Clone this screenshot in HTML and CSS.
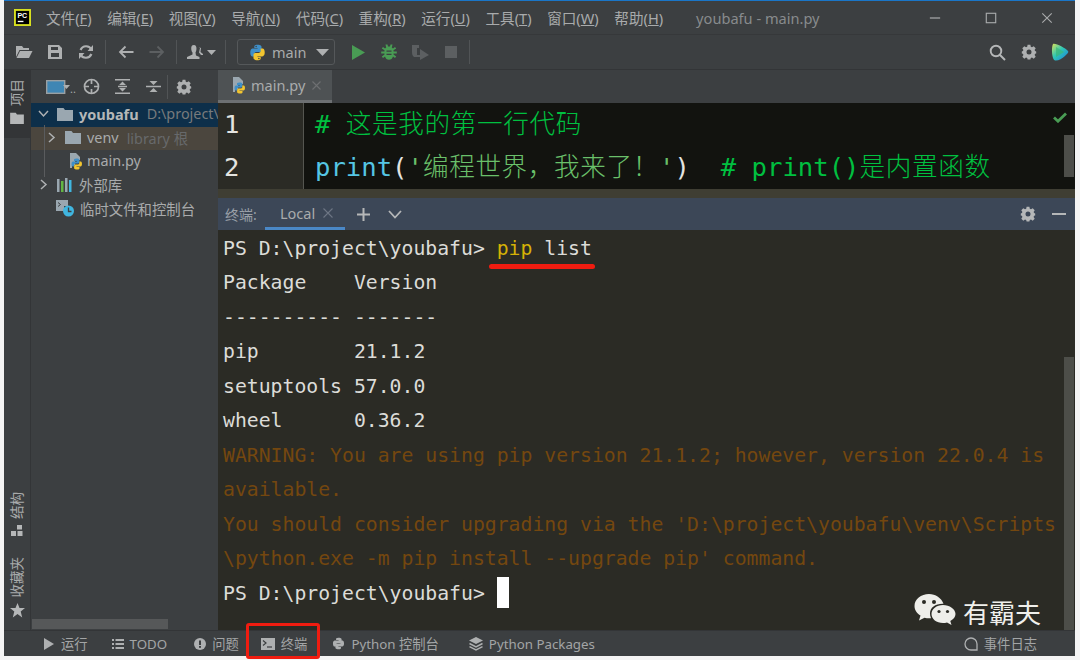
FILE: index.html
```html
<!DOCTYPE html>
<html lang="zh">
<head>
<meta charset="utf-8">
<title>youbafu - main.py</title>
<link rel="stylesheet" href="styles.css">
</head>
<body>
<svg class="defs" width="0" height="0" aria-hidden="true">
  <symbol id="py" viewBox="0 0 16 16">
    <path fill="#3f8fc8" d="M7.9 .8C4.9 .8 5 2.2 5 2.2V3.7H8.1V4.2H3.9S1.2 3.9 1.2 7.9 3.4 11.7 3.4 11.7H5V9.6S4.9 7.6 7 7.6H10S11.8 7.6 11.8 5.8V2.8S12 .8 7.9 .8Z"/>
    <path fill="#f2c530" d="M8.1 15.2C11.1 15.2 11 13.8 11 13.8V12.3H7.9V11.8H12.1S14.8 12.1 14.8 8.1 12.6 4.3 12.6 4.3H11V6.4S11.1 8.4 9 8.4H6S4.2 8.4 4.2 10.2V13.2S4 15.2 8.1 15.2Z"/>
    <circle cx="6.7" cy="2.4" r=".7" fill="#3c3f41"/><circle cx="9.3" cy="13.6" r=".7" fill="#3c3f41"/>
  </symbol>
  <symbol id="pyfile" viewBox="0 0 18 18">
    <path fill="#9aa7b0" d="M3 1H9L13 5V8H8V13H5V16H3Z"/>
    <path fill="#3f8fc8" d="M9.5 6.5C7 6.5 7 7.6 7 7.6V9H10V9.5H6.4S4.5 9.4 4.5 12 6 14.5 6 14.5H7.2V13S7.1 11.5 8.7 11.5H11S12.4 11.5 12.4 10V8S12.5 6.5 9.5 6.5Z"/>
    <path fill="#f2c530" d="M10 17.5C12.5 17.5 12.5 16.4 12.5 16.4V15H9.5V14.5H13.1S15 14.6 15 12 13.5 9.5 13.5 9.5H12.3V11S12.4 12.5 10.8 12.5H8.5S7.1 12.5 7.1 14V16S7 17.5 10 17.5Z"/>
  </symbol>
  <symbol id="gear" viewBox="0 0 16 16">
    <path fill="currentColor" fill-rule="evenodd" d="M6.6 .8H9.4L9.8 2.8 11 3.3 12.7 2.2 14.7 4.2 13.6 5.9 14.1 7.1 15.2 7.4V9.4L14.1 9.8 13.6 11 14.7 12.7 12.7 14.7 11 13.6 9.8 14.1 9.4 15.4H6.6L6.2 14.1 5 13.6 3.3 14.7 1.3 12.7 2.4 11 1.9 9.8 .8 9.4V7.4L1.9 7.1 2.4 5.9 1.3 4.2 3.3 2.2 5 3.3 6.2 2.8ZM8 5.6A2.5 2.5 0 1 0 8 10.6 2.5 2.5 0 1 0 8 5.6Z"/>
  </symbol>
  <symbol id="folder" viewBox="0 0 16 14">
    <path fill="currentColor" d="M0 1H6.5L8 3H16V14H0Z"/>
  </symbol>
</svg>

<div class="window">
  <header class="titlebar">
    <svg class="logo" viewBox="0 0 18 18"><rect width="18" height="18" fill="#d8e020"/><rect x="2" y="2" width="14" height="14" fill="#000"/><rect x="4" y="12.5" width="6" height="1.4" fill="#fff"/><text x="3.6" y="9.6" class="logo-text">PC</text></svg>
    <nav class="menu">
      <span>文件(<u>F</u>)</span><span>编辑(<u>E</u>)</span><span>视图(<u>V</u>)</span><span>导航(<u>N</u>)</span><span>代码(<u>C</u>)</span><span>重构(<u>R</u>)</span><span>运行(<u>U</u>)</span><span>工具(<u>T</u>)</span><span>窗口(<u>W</u>)</span><span>帮助(<u>H</u>)</span>
    </nav>
    <div class="wintitle">youbafu - main.py</div>
    <div class="winctl">
      <svg viewBox="0 0 14 14"><path d="M1 7H13" stroke="#a9abac" stroke-width="1.4"/></svg>
      <svg viewBox="0 0 14 14"><rect x="1.5" y="1.5" width="11" height="11" fill="none" stroke="#a9abac" stroke-width="1.3"/></svg>
      <svg viewBox="0 0 14 14"><path d="M1.5 1.5 12.5 12.5M12.5 1.5 1.5 12.5" stroke="#a9abac" stroke-width="1.3"/></svg>
    </div>
  </header>

  <div class="toolbar">
    <span class="tb"><svg width="18" height="14" viewBox="0 0 18 14"><path fill="#aeb0b1" d="M1 1H7L8.500 3H14V5H4.500L1 12Z"/><path fill="#aeb0b1" d="M5 6H17.500L14 13H1.500Z"/></svg></span>
    <span class="tb"><svg width="16" height="16" viewBox="0 0 16 16"><path fill="#aeb0b1" fill-rule="evenodd" d="M1 1H12L15 4V15H1ZM4 3V6H11V3ZM4 9V13H12V9Z"/></svg></span>
    <span class="tb"><svg width="16" height="16" viewBox="0 0 16 16"><path fill="none" stroke="#aeb0b1" stroke-width="2.200" d="M13.500 5.500A6 6 0 0 0 2.600 6M2.500 10.500A6 6 0 0 0 13.400 10"/><path fill="#aeb0b1" d="M15 1V7H9.500ZM1 15V9H6.500Z"/></svg></span>
    <span class="tsep"></span>
    <span class="tb"><svg width="16" height="14" viewBox="0 0 16 14"><path fill="none" stroke="#aeb0b1" stroke-width="1.800" d="M15.500 7H2M7.500 1.500 2 7 7.500 12.500"/></svg></span>
    <span class="tb"><svg width="16" height="14" viewBox="0 0 16 14"><path fill="none" stroke="#5c5f61" stroke-width="1.800" d="M.5 7H14M8.500 1.500 14 7 8.500 12.500"/></svg></span>
    <span class="tsep"></span>
    <span class="tb tb-user"><svg width="31" height="16" viewBox="0 0 31 16"><path fill="#aeb0b1" d="M8 1C5.500 1 5 3 5.300 5.500 5.500 7 6 8 6.500 8.500V10.500L1 13V15H13.500V13L10 11.500 9.500 8.500C11 6 11 1 8 1Z"/><path fill="#aeb0b1" d="M12.500 3 14 4 13 8.500 15 11H17V10L14.500 8 15 4Z"/><path fill="#aeb0b1" d="M21 6H30L25.500 11Z"/></svg></span>
    <span class="tsep"></span>
    <div class="runcfg">
      <svg class="ic17" viewBox="0 0 16 16"><use href="#py"/></svg>
      <span class="runname">main</span>
      <svg class="caret" width="13" height="7" viewBox="0 0 13 7"><path fill="#aeb0b1" d="M0 0H13L6.500 7Z"/></svg>
    </div>
    <span class="tb tb-run"><svg width="14" height="15" viewBox="0 0 14 15"><path fill="#499c54" d="M1 0 14 7.500 1 15Z"/></svg></span>
    <span class="tb"><svg width="16" height="16" viewBox="0 0 16 16"><path fill="#499c54" d="M4.500 .5H6.500L7 2.500H9L9.500 .5H11.500L10.800 3.500 12 4.500 14 3 15.200 4.500 12.500 6.300V7.500H15.800V9.500H12.500V10.500L15.200 12.500 14 14 12 12.500C11.500 14.500 10 15.800 8 15.800S4.500 14.500 4 12.500L2 14 .8 12.500 3.500 10.500V9.500H.2V7.500H3.500V6.300L.8 4.500 2 3 4 4.500 5.200 3.500Z"/><path fill="#3c3f41" d="M5.500 6.500H10.500V7.800H5.500ZM5.500 9.800H10.500V11H5.500Z"/></svg></span>
    <span class="tb"><svg width="18" height="16" viewBox="0 0 18 16"><path fill="#5c5f61" d="M1 1H8V4H6V11H9V13H3C1.500 12 1 10 1 8Z"/><path fill="#5c5f61" d="M9 5 18 11 9 16Z"/></svg></span>
    <span class="tb"><svg width="12" height="12" viewBox="0 0 12 12"><rect width="12" height="12" fill="#5c5f61"/></svg></span>
    <span class="tsep tsep-end"></span>
    <span class="tspace"></span>
    <span class="tb"><svg width="17" height="17" viewBox="0 0 17 17"><circle cx="7" cy="7" r="5.300" fill="none" stroke="#b5b7b8" stroke-width="1.900"/><path d="M11 11 16 16" stroke="#b5b7b8" stroke-width="2"/></svg></span>
    <span class="tb tb-gear"><svg width="16" height="16"><use href="#gear"/></svg></span>
    <span class="tb tb-brand"><svg width="18" height="18" viewBox="0 0 18 18"><defs><linearGradient id="bg" x1="0" y1="0" x2="1" y2="1"><stop offset="0" stop-color="#d8e05a"/><stop offset=".45" stop-color="#2fc8b4"/><stop offset="1" stop-color="#1c7fe0"/></linearGradient></defs><path fill="url(#bg)" d="M2 1C5 0 14 5 17 8 18 9.500 16 11 14 13 11 16 7 18 4 17.500 1 17 0 5 2 1Z"/><path fill="#3cb878" d="M5 4 13 9 5 14Z" opacity=".7"/></svg></span>
  </div>

  <div class="main">
    <aside class="strip">
      <div class="strip-top">
        <span class="vtext">项目</span>
        <svg class="strip-folder" width="14" height="12"><use href="#folder"/></svg>
      </div>
      <div class="strip-bottom">
        <span class="vtext">结构</span>
        <svg class="strip-struct" width="12" height="11" viewBox="0 0 12 11"><rect x="6" y="0" width="5" height="4.500" fill="#b5b7b8"/><rect x="0" y="6" width="5" height="5" fill="#b5b7b8"/><rect x="6.500" y="6" width="5" height="5" fill="#b5b7b8"/></svg>
        <span class="vtext vtext-fav">收藏夹</span>
        <svg class="strip-star" width="15" height="15" viewBox="0 0 15 15"><path fill="#b5b7b8" d="M7.500 0 9.500 5H15L10.700 8.500 12.200 14.500 7.500 11 2.800 14.500 4.300 8.500 0 5H5.500Z"/></svg>
      </div>
    </aside>

    <section class="project">
      <div class="proj-head">
        <span class="pb pb-view"><svg width="25" height="14" viewBox="0 0 25 14"><rect x=".7" y=".7" width="18" height="12.600" fill="#3f86b4" stroke="#9aa0a3" stroke-width="1.400"/><path fill="#aeb0b1" d="M17 5H24L20.500 9Z"/></svg><span class="dots">..</span></span>
        <span class="pb pb-c"><svg width="17" height="17" viewBox="0 0 17 17"><circle cx="8.500" cy="8.500" r="7" fill="none" stroke="#aeb0b1" stroke-width="1.700"/><path d="M8.500 1V6M8.500 11V16M1 8.500H6M11 8.500H16" stroke="#aeb0b1" stroke-width="1.700"/></svg></span>
        <span class="pb pb-c"><svg width="15" height="15" viewBox="0 0 15 15"><path d="M0 .8H15M0 14.200H15M3 7.500H12" stroke="#aeb0b1" stroke-width="1.500"/><path fill="#aeb0b1" d="M7.500 2.500 11 6H4ZM7.500 12.500 4 9H11Z"/></svg></span>
        <span class="pb pb-c"><svg width="15" height="15" viewBox="0 0 15 15"><path d="M0 7.500H15" stroke="#aeb0b1" stroke-width="1.500"/><path fill="#aeb0b1" d="M7.500 6 3.500 2H11.500ZM7.500 9 11.500 13H3.500Z"/></svg></span>
        <span class="psep"></span>
        <span class="pb pb-c"><svg width="16" height="16"><use href="#gear"/></svg></span>
      </div>
      <div class="tree">
        <div class="row row-sel">
          <svg class="chev" width="11" height="11" viewBox="0 0 11 11"><path d="M1 3 5.500 8 10 3" fill="none" stroke="#afb1b3" stroke-width="1.500"/></svg>
          <svg class="fold" width="16" height="14"><use href="#folder"/></svg>
          <b class="name-b">youbafu</b><span class="path">D:\project\</span>
        </div>
        <div class="row row-lib">
          <svg class="chev" width="11" height="11" viewBox="0 0 11 11"><path d="M3 1 8 5.500 3 10" fill="none" stroke="#afb1b3" stroke-width="1.500"/></svg>
          <svg class="fold" width="16" height="14"><use href="#folder"/></svg>
          <span class="name">venv</span><span class="dim">library 根</span>
        </div>
        <div class="row row-file">
          <svg class="pyf" width="18" height="18"><use href="#pyfile"/></svg>
          <span class="name">main.py</span>
        </div>
        <div class="row row-top">
          <svg class="chev" width="11" height="11" viewBox="0 0 11 11"><path d="M3 1 8 5.500 3 10" fill="none" stroke="#afb1b3" stroke-width="1.500"/></svg>
          <svg class="fold" width="16" height="14" viewBox="0 0 16 14"><rect x="0" y="1" width="2.500" height="13" fill="#9aa7b0"/><rect x="4" y="3" width="2.500" height="11" fill="#62b543"/><rect x="8" y="0" width="2.500" height="14" fill="#9aa7b0"/><rect x="12" y="2" width="2.500" height="12" fill="#40b6e0"/></svg>
          <span class="name">外部库</span>
        </div>
        <div class="row row-top row-nochev">
          <svg class="fold" width="18" height="18" viewBox="0 0 18 18"><path fill="#9aa7b0" d="M0 1H12V7H8V12H0Z"/><path d="M2 3.500 4.500 5.500 2 7.500" fill="none" stroke="#3c3f41" stroke-width="1"/><circle cx="12.500" cy="12" r="5.500" fill="#40b6e0"/><path d="M12.500 8.500V12.500H15.500" fill="none" stroke="#3c3f41" stroke-width="1.300"/></svg>
          <span class="name">临时文件和控制台</span>
        </div>
        <div class="guide"></div>
      </div>
      <div class="hscroll"></div>
    </section>

    <section class="work">
      <div class="tabs">
        <div class="tab">
          <svg width="18" height="18"><use href="#pyfile"/></svg>
          <span class="tabname">main.py</span>
          <svg class="tabx" width="9" height="9" viewBox="0 0 9 9"><path d="M.5 .5 8.500 8.500M8.500 .5 .5 8.500" stroke="#6e7072" stroke-width="1.100"/></svg>
        </div>
      </div>
      <div class="editor">
        <div class="gutter"><div>1</div><div>2</div></div>
        <div class="code">
          <div class="cl"><span class="cm">#&nbsp;<span class="cjk">这是我的第一行代码</span></span></div>
          <div class="cl"><span class="fn">print</span><span class="pn">(</span><span class="st">'<span class="cjk">编程世界，我来了！</span>'</span><span class="pn">)</span>&nbsp;&nbsp;<span class="cm">#&nbsp;print()<span class="cjk">是内置函数</span></span></div>
        </div>
        <svg class="check" width="14" height="11" viewBox="0 0 14 11"><path d="M1 5.500 5 9.200 13 1.500" fill="none" stroke="#499c54" stroke-width="2.800"/></svg>
        <div class="vscroll vscroll-ed"></div>
      </div>
      <div class="splitter"></div>
      <div class="termhead">
        <span class="termlabel">终端:</span>
        <div class="termtab"><span>Local</span><svg width="10" height="10" viewBox="0 0 10 10"><path d="M.5 .5 9.500 9.500M9.500 .5 .5 9.500" stroke="#6d7684" stroke-width="1.100"/></svg></div>
        <svg class="tplus" width="13" height="13" viewBox="0 0 13 13"><path d="M6.500 0V13M0 6.500H13" stroke="#b5b7b8" stroke-width="2"/></svg>
        <svg class="tchev" width="14" height="9" viewBox="0 0 14 9"><path d="M1 1 7 7.500 13 1" fill="none" stroke="#b5b7b8" stroke-width="1.800"/></svg>
        <span class="tspace"></span>
        <svg class="tgear" width="16" height="16"><use href="#gear"/></svg>
        <svg class="tmin" width="14" height="2" viewBox="0 0 14 2"><rect width="14" height="2" fill="#b5b7b8"/></svg>
      </div>
      <div class="terminal">
        <div class="tl">PS D:\project\youbafu&gt; <span class="cmd">pip</span> list</div>
        <div class="tl">Package    Version</div>
        <div class="tl">---------- -------</div>
        <div class="tl">pip        21.1.2</div>
        <div class="tl">setuptools 57.0.0</div>
        <div class="tl">wheel      0.36.2</div>
        <div class="tl warn">WARNING: You are using pip version 21.1.2; however, version 22.0.4 is</div>
        <div class="tl warn">available.</div>
        <div class="tl warn">You should consider upgrading via the 'D:\project\youbafu\venv\Scripts</div>
        <div class="tl warn">\python.exe -m pip install --upgrade pip' command.</div>
        <div class="tl">PS D:\project\youbafu&gt; <span class="cursor"></span></div>
        <div class="underline"></div>
        <div class="vscroll vscroll-term"></div>
        <div class="mark">
          <svg width="42" height="37" viewBox="0 0 42 37"><path fill="#eeeeea" d="M15 1C7 1 .5 6.300 .5 13C.5 17 3 20.500 6.500 22.600L5 27.500 10.500 24.700C12 25.100 13.500 25.300 15 25.300L17 25.200C16.300 23.500 16 22 16 20.500C16 14.500 21.500 10.500 29.500 10.800 27.500 5 21.500 1 15 1Z"/><path fill="#eeeeea" d="M29 12C22.500 12 17.500 16 17.500 21S22.500 30 29 30C30.500 30 31.500 29.800 33 29.400L37.500 32 36.300 28C39.500 26 41.500 24 41.500 21 41.500 16 35.500 12 29 12Z"/><circle cx="10" cy="9" r="2" fill="#2b2b25"/><circle cx="20" cy="9" r="2" fill="#2b2b25"/><circle cx="25" cy="18.500" r="1.600" fill="#2b2b25"/><circle cx="33.500" cy="18.500" r="1.600" fill="#2b2b25"/></svg>
          <span class="marktext">有霸夫</span>
        </div>
      </div>
    </section>
  </div>

  <footer class="status">
    <span class="si si-run"><svg width="10" height="12" viewBox="0 0 10 12"><path fill="#aeb0b1" d="M0 0 10 6 0 12Z"/></svg>运行</span>
    <span class="si"><svg width="12" height="10" viewBox="0 0 12 10"><path fill="#aeb0b1" d="M0 0H2V2H0ZM3.500 0H12V2H3.500ZM0 4H2V6H0ZM3.500 4H12V6H3.500ZM0 8H2V10H0ZM3.500 8H12V10H3.500Z"/></svg>TODO</span>
    <span class="si si-prob"><svg width="12" height="12" viewBox="0 0 12 12"><circle cx="6" cy="6" r="6" fill="#aeb0b1"/><rect x="5" y="2.500" width="2" height="4.500" fill="#3c3f41"/><rect x="5" y="8" width="2" height="1.800" fill="#3c3f41"/></svg>问题</span>
    <span class="si si-term"><svg width="14" height="12" viewBox="0 0 14 12"><rect width="14" height="12" fill="#aeb0b1"/><path d="M2 2.500 5 5 2 7.500" fill="none" stroke="#3c3f41" stroke-width="1.200"/><path d="M6 9H11" stroke="#3c3f41" stroke-width="1.200"/></svg>终端</span>
    <span class="si"><svg width="13" height="13" viewBox="0 0 16 16"><path fill="#aeb0b1" d="M7.900 .8C4.900 .8 5 2.200 5 2.200V3.700H8.100V4.200H3.900S1.200 3.900 1.200 7.900 3.400 11.700 3.400 11.700H5V9.600S4.900 7.600 7 7.600H10S11.800 7.600 11.800 5.800V2.800S12 .8 7.900 .8Z"/><path fill="#aeb0b1" d="M8.100 15.200C11.100 15.200 11 13.800 11 13.800V12.300H7.900V11.800H12.100S14.800 12.100 14.800 8.100 12.600 4.300 12.600 4.300H11V6.400S11.100 8.400 9 8.400H6S4.200 8.400 4.200 10.200V13.200S4 15.200 8.100 15.200Z"/></svg>Python 控制台</span>
    <span class="si si-pack"><svg width="14" height="14" viewBox="0 0 14 14"><path fill="#aeb0b1" d="M7 0 14 3.500 7 7 0 3.500Z"/><path fill="none" stroke="#aeb0b1" stroke-width="1.500" d="M.5 6.500 7 9.800 13.500 6.500M.5 9.700 7 13 13.500 9.700"/></svg>Python Packages</span>
    <span class="tspace"></span>
    <span class="si si-log"><svg width="14" height="14" viewBox="0 0 14 14"><path fill="none" stroke="#aeb0b1" stroke-width="1.300" d="M13 13V7A6 6 0 1 0 7 13Z"/></svg>事件日志</span>
  </footer>
  <div class="redbox"></div>
</div>
</body>
</html>
```

FILE: styles.css
```css
* { box-sizing: border-box; }
html, body { margin: 0; padding: 0; }
body {
  width: 1080px; height: 660px; overflow: hidden; background: #f4f4f4;
  font-family: "Noto Sans", "Noto Sans CJK SC", sans-serif;
  color: #a9abac; font-size: 14px;
}
.defs { position: absolute; }
.window {
  position: relative; margin-left: 4px; width: 1071px; height: 656px;
  display: flex; flex-direction: column; background: #3c3f41;
  border-top: 1px solid #1a76c8;
}
.tspace { flex: 1; }

/* title bar */
.titlebar { height: 34px; flex: none; display: flex; align-items: center; border-bottom: 1px solid #36383a; }
.logo { width: 17px; height: 17px; margin-left: 10px; flex: none; margin-top: -1px; }
.logo-text { font: bold 7.5px "Liberation Sans", sans-serif; fill: #fff; }
.menu { display: flex; gap: 15.6px; margin-left: 15px; font-size: 14.6px; color: #a9abac; }
.menu span { white-space: nowrap; }
.wintitle { margin-left: 33px; color: #888b8d; font-size: 14.6px; }
.winctl { margin-left: auto; display: flex; gap: 44px; margin-right: 22px; }
.winctl svg { width: 12px; height: 12px; display: block; }

/* toolbar */
.toolbar { height: 35px; flex: none; display: flex; align-items: center; padding-left: 4px; border-bottom: 1px solid #333537; }
.tb { width: 31px; height: 26px; display: flex; align-items: center; justify-content: center; flex: none; color: #aeb0b1; }
.tb-user { width: 40px; }
.tb-run { margin-left: 7px; }
.tb-gear { color: #aeb0b1; }
.tsep { width: 1px; height: 24px; background: #515456; flex: none; margin: 0 4px; }
.tsep-end { margin-left: 3px; }
.runcfg {
  width: 98px; height: 26px; margin-left: 7px; flex: none; border: 1px solid #55585a; border-radius: 3px;
  display: flex; align-items: center; padding-left: 11px; color: #a9abac;
}
.ic17 { width: 17px; height: 17px; }
.runname { margin-left: 6px; font-size: 14.5px; }
.caret { margin-left: 10px; }

/* main */
.main { flex: 1; min-height: 0; display: flex; }
.strip { width: 27px; flex: none; display: flex; flex-direction: column; justify-content: space-between; background: #3c3f41; border-right: 1px solid #333537; }
.strip-top { background: #333537; height: 68px; display: flex; flex-direction: column; align-items: center; padding-top: 9px; }
.strip-folder { color: #b5b7b8; margin-top: 6px; }
.strip-bottom { display: flex; flex-direction: column; align-items: center; padding-bottom: 12px; }
.vtext { writing-mode: vertical-rl; text-orientation: sideways; transform: rotate(180deg); font-size: 13.5px; line-height: 16px; color: #a9abac; white-space: nowrap; }
.vtext-fav { margin-top: 21px; }
.strip-struct { margin-top: 6px; }
.strip-star { margin-top: 6px; }

.project { width: 187px; flex: none; position: relative; overflow: hidden; background: #3c3f41; display: flex; flex-direction: column; }
.proj-head { height: 33px; flex: none; display: flex; align-items: center; padding-left: 15px; }
.pb { display: flex; align-items: center; justify-content: center; flex: none; }
.pb-view { width: 30px; justify-content: flex-start; }
.dots { color: #a9abac; font-size: 11px; margin-left: -1px; margin-top: 4px; }
.pb-c { width: 31px; color: #aeb0b1; }
.psep { width: 1px; height: 24px; background: #515456; margin: 0 7px 0 -2px; flex: none; }
.psep + .pb-c { margin-left: -7px; }
.tree { position: relative; display: flex; flex-direction: column; }
.row { height: 23.6px; display: flex; align-items: center; white-space: nowrap; font-size: 14.4px; padding-bottom: 2px; }
.row-sel { background: #0d2f4a; padding-left: 7px; }
.row-lib { background: #4b463e; padding-left: 15px; }
.row-file { padding-left: 36px; }
.row-top { padding-left: 7px; }
.row-nochev { padding-left: 25px; }
.chev { flex: none; margin-right: 8px; }
.fold { flex: none; color: #9aa7b0; margin-right: 6px; }
.pyf { flex: none; margin-right: 2px; }
.name-b { color: #b5b7b8; font-weight: 700; font-size: 14.5px; }
.path { color: #777a7c; margin-left: 8px; }
.name { color: #a9abac; }
.dim { color: #67696b; margin-left: 8px; }
.guide { position: absolute; left: 13px; top: 22px; width: 1px; height: 52px; background: #5a5c5e; }
.hscroll { position: absolute; left: 1px; bottom: 1px; width: 136px; height: 10px; background: #565859; }

/* editor */
.work { flex: 1; min-width: 0; display: flex; flex-direction: column; }
.tabs { height: 33px; flex: none; display: flex; background: #3c3f41; }
.tab { width: 114px; display: flex; align-items: center; padding-left: 12px; gap: 3px; background: #4e5254; border-bottom: 3px solid #6d7072; }
.tabname { font-size: 14.5px; color: #a9abac; }
.tabx { margin-left: 4px; }
.editor { position: relative; height: 86px; flex: none; display: flex; background: #12130f; overflow: hidden; }
.gutter {
  width: 86px; flex: none; background: #2b2b25; border-right: 1px solid #555650; padding-left: 6px;
  font: 25.6px/43px "DejaVu Sans Mono", monospace; color: #e4e4e0;
}
.code { padding-left: 11px; margin-top: -3px; font: 25.6px/43px "DejaVu Sans Mono", "Noto Sans CJK SC", monospace; color: #e4e4e0; white-space: nowrap; }
.cjk { font-family: "Noto Sans CJK SC", sans-serif; letter-spacing: .65px; font-weight: 300; }
.cl { height: 43px; }
.cm { color: #00c040; }
.fn { color: #55c6e4; }
.pn { color: #e4e4e0; }
.st { color: #6ac06a; }
.check { position: absolute; right: 8px; top: 9px; }
.vscroll { position: absolute; right: 1px; width: 10px; background: #4d4e49; }
.vscroll-ed { top: 32px; height: 42px; }
.vscroll-term { top: 127px; bottom: 0; }
.splitter { height: 9px; flex: none; background: #3f3e33; }
.termhead { height: 32px; flex: none; background: #3c4757; display: flex; align-items: center; padding-left: 7px; }
.termlabel { color: #9aa0a8; font-size: 14px; width: 40px; }
.termtab { width: 80px; height: 32px; display: flex; align-items: center; padding-left: 15px; gap: 8px; border-bottom: 3px solid #4a88c7; color: #a9abac; font-size: 14.5px; }
.tplus { margin-left: 12px; }
.tchev { margin-left: 18px; }
.tgear { color: #b5b7b8; }
.tmin { margin-left: 16px; margin-right: 9px; }

.terminal {
  position: relative; flex: 1; min-height: 0; overflow: hidden; background: #2b2b25; padding: 1.600px 0 0 5px;
  font: 19.77px/34.5px "DejaVu Sans Mono", monospace; color: #dcdcd8;
}
.tl { height: 34.5px; white-space: pre; }
.cmd { color: #d4b106; }
.warn { color: #74470f; }
.cursor { display: inline-block; width: 12px; height: 31px; background: #fff; vertical-align: -8px; }
.underline { position: absolute; left: 271px; top: 34px; width: 106px; height: 5px; border-radius: 3px; background: #f01c10; }
.mark { position: absolute; left: 696px; top: 363px; display: flex; align-items: center; gap: 7px; }
.marktext { font: 26px/30px "Noto Sans CJK SC", sans-serif; color: #f0f0ec; }

/* status */
.status { height: 26px; flex: none; display: flex; align-items: center; padding-left: 40px; gap: 24px; background: #3c3f41; border-top: 1px solid #333537; font-size: 13.3px; color: #a3a5a6; }
.si { display: flex; align-items: center; gap: 6px; white-space: nowrap; }
.si-run { gap: 7px; }
.si-prob { margin-left: 3px; margin-right: -2px; }
.si-term { margin-right: 1px; }
.si-pack { margin-left: 6px; }
.si-log { margin-right: 38px; }
.redbox { position: absolute; left: 242px; top: 622px; width: 74px; height: 36px; border: 3px solid #f01c10; border-radius: 3px; }
```
